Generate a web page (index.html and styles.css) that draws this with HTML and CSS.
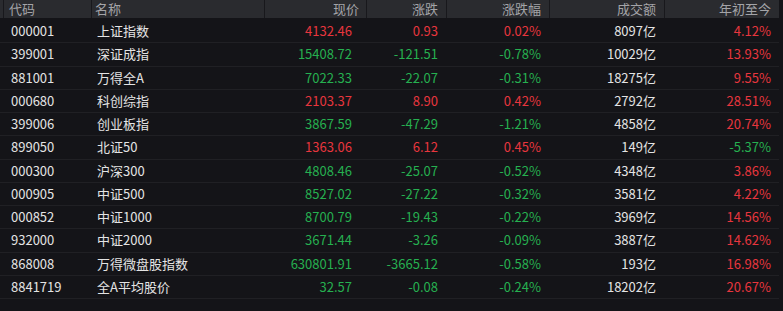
FILE: index.html
```html
<!DOCTYPE html>
<html lang="zh-CN">
<head>
<meta charset="utf-8">
<title>指数行情</title>
<link rel="stylesheet" href="styles.css">
</head>
<body>
<div class="table">
  <div class="head">
    <div class="c code">代码</div>
    <div class="c name">名称</div>
    <div class="c num price">现价</div>
    <div class="c num">涨跌</div>
    <div class="c num">涨跌幅</div>
    <div class="c num">成交额</div>
    <div class="c num">年初至今</div>
  </div>
  <div class="row"><div class="c code">000001</div><div class="c name">上证指数</div><div class="c num price up">4132.46</div><div class="c num up">0.93</div><div class="c num up">0.02%</div><div class="c num">8097亿</div><div class="c num up">4.12%</div></div>
  <div class="row"><div class="c code">399001</div><div class="c name">深证成指</div><div class="c num price dn">15408.72</div><div class="c num dn">-121.51</div><div class="c num dn">-0.78%</div><div class="c num">10029亿</div><div class="c num up">13.93%</div></div>
  <div class="row"><div class="c code">881001</div><div class="c name">万得全A</div><div class="c num price dn">7022.33</div><div class="c num dn">-22.07</div><div class="c num dn">-0.31%</div><div class="c num">18275亿</div><div class="c num up">9.55%</div></div>
  <div class="row"><div class="c code">000680</div><div class="c name">科创综指</div><div class="c num price up">2103.37</div><div class="c num up">8.90</div><div class="c num up">0.42%</div><div class="c num">2792亿</div><div class="c num up">28.51%</div></div>
  <div class="row"><div class="c code">399006</div><div class="c name">创业板指</div><div class="c num price dn">3867.59</div><div class="c num dn">-47.29</div><div class="c num dn">-1.21%</div><div class="c num">4858亿</div><div class="c num up">20.74%</div></div>
  <div class="row"><div class="c code">899050</div><div class="c name">北证50</div><div class="c num price up">1363.06</div><div class="c num up">6.12</div><div class="c num up">0.45%</div><div class="c num">149亿</div><div class="c num dn">-5.37%</div></div>
  <div class="row"><div class="c code">000300</div><div class="c name">沪深300</div><div class="c num price dn">4808.46</div><div class="c num dn">-25.07</div><div class="c num dn">-0.52%</div><div class="c num">4348亿</div><div class="c num up">3.86%</div></div>
  <div class="row"><div class="c code">000905</div><div class="c name">中证500</div><div class="c num price dn">8527.02</div><div class="c num dn">-27.22</div><div class="c num dn">-0.32%</div><div class="c num">3581亿</div><div class="c num up">4.22%</div></div>
  <div class="row"><div class="c code">000852</div><div class="c name">中证1000</div><div class="c num price dn">8700.79</div><div class="c num dn">-19.43</div><div class="c num dn">-0.22%</div><div class="c num">3969亿</div><div class="c num up">14.56%</div></div>
  <div class="row"><div class="c code">932000</div><div class="c name">中证2000</div><div class="c num price dn">3671.44</div><div class="c num dn">-3.26</div><div class="c num dn">-0.09%</div><div class="c num">3887亿</div><div class="c num up">14.62%</div></div>
  <div class="row"><div class="c code">868008</div><div class="c name">万得微盘股指数</div><div class="c num price dn">630801.91</div><div class="c num dn">-3665.12</div><div class="c num dn">-0.58%</div><div class="c num">193亿</div><div class="c num up">16.98%</div></div>
  <div class="row"><div class="c code">8841719</div><div class="c name">全A平均股价</div><div class="c num price dn">32.57</div><div class="c num dn">-0.08</div><div class="c num dn">-0.24%</div><div class="c num">18202亿</div><div class="c num up">20.67%</div></div>
</div>
</body>
</html>
```
FILE: styles.css
```css
html, body {
  margin: 0;
  padding: 0;
  background: #141418;
}
body {
  font-family: "Noto Sans CJK SC", "Noto Sans", sans-serif;
  font-size: 13px;
  color: #e4e4e4;
  width: 783px;
  height: 311px;
  overflow: hidden;
}
.table {
  display: flex;
  flex-direction: column;
  width: 779px;
}
.head, .row {
  display: grid;
  grid-template-columns: 91px 173px 102px 80px 103px 115px 115px;
}
.head {
  height: 18px;
  background: #2a2b2f;
  color: #a4a4a8;
  margin-bottom: 2px;
  line-height: 17px;
}
.head .c {
  border-left: 1px solid #18181c;
}
.head .code {
  margin-left: 3px;
  padding-left: 5px;
}
.head .name {
  padding-left: 3px;
}
.head .num {
  padding-right: 8px;
}
.head .price {
  padding-right: 7px;
}
.row {
  height: 23.25px;
  box-sizing: border-box;
  border-bottom: 1px solid #202024;
  line-height: 22px;
}
.c {
  white-space: nowrap;
}
.row .code {
  padding-left: 11px;
}
.row .name {
  padding-left: 6px;
}
.num {
  text-align: right;
  padding-right: 8px;
}
.row .price {
  padding-right: 14px;
}
.up {
  color: #e8363e;
}
.dn {
  color: #26b050;
}
```
